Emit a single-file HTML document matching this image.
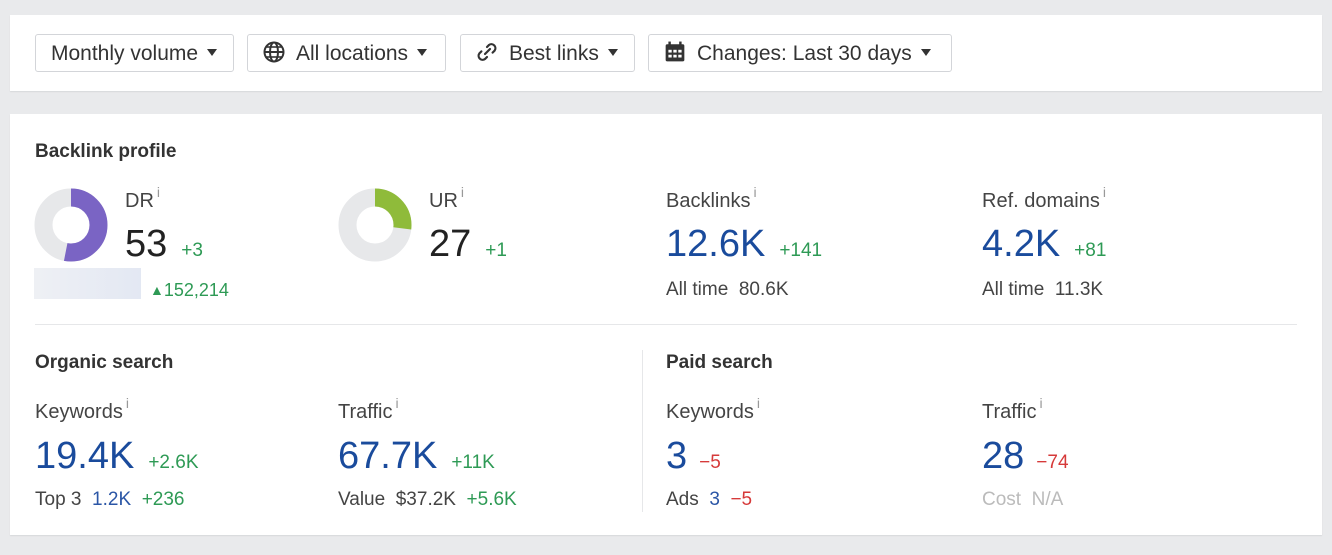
<!DOCTYPE html>
<html><head><meta charset="utf-8"><style>
*{margin:0;padding:0;box-sizing:border-box}
body{width:1332px;height:555px;background:#e9eaec;font-family:"Liberation Sans",Arial,sans-serif;color:#333;position:relative;overflow:hidden}
.card{position:absolute;left:10px;width:1312px;background:#fff;box-shadow:0 1px 1px rgba(0,0,0,.08)}
.btn{position:absolute;top:34px;height:38px;border:1px solid #d3d5d9;border-radius:3px;background:#fff;font-size:21px;line-height:37px;color:#333;padding-left:15px;white-space:nowrap}
.btn .car{display:inline-block;width:0;height:0;border-left:5.5px solid transparent;border-right:5.5px solid transparent;border-top:7px solid #333;vertical-align:middle;margin-left:9px;margin-top:-3px}
.btn svg{vertical-align:middle;margin-top:-4px;margin-right:11px}
.a{position:absolute;white-space:nowrap;line-height:1}
.h{font-size:19px;font-weight:bold;color:#333}
.l{font-size:20px;color:#444}
.l sup{font-size:14px;color:#999;vertical-align:top;position:relative;top:-6px;margin-left:3px}
.big{font-size:38px;color:#1a4b9c}
.big.k{color:#222}
.g{color:#2e9a55;font-size:19px;margin-left:14px}
.r{color:#d63a3a;font-size:19px;margin-left:12px}
.s{font-size:19px;color:#444}
.s .b{color:#2b56a6}
.s .gg{color:#2e9a55}
.s .rr{color:#d63a3a}
</style></head><body>
<div class="card" style="top:15px;height:76px"></div>
<div class="btn" style="left:35px;width:199px">Monthly volume<span class="car"></span></div>
<div class="btn" style="left:247px;width:199px"><svg width="22" height="22" viewBox="0 0 22 22"><circle cx="11" cy="11" r="9.5" fill="none" stroke="#333" stroke-width="2"/><ellipse cx="11" cy="11" rx="4" ry="9.5" fill="none" stroke="#333" stroke-width="2"/><line x1="1.5" y1="11" x2="20.5" y2="11" stroke="#333" stroke-width="2"/><line x1="3" y1="6" x2="19" y2="6" stroke="#333" stroke-width="1.6"/><line x1="3" y1="16" x2="19" y2="16" stroke="#333" stroke-width="1.6"/></svg>All locations<span class="car"></span></div>
<div class="btn" style="left:460px;width:175px"><svg width="22" height="22" viewBox="0 0 22 22"><path d="M9 13l5-5M11 6l2-2a4 4 0 015.6 5.6l-2 2M11 16l-2 2a4 4 0 01-5.6-5.6l2-2" fill="none" stroke="#333" stroke-width="2.2" stroke-linecap="round"/></svg>Best links<span class="car"></span></div>
<div class="btn" style="left:648px;width:304px"><svg width="22" height="22" viewBox="0 0 20 20"><rect x="1.5" y="3" width="17" height="15.5" rx="1.5" fill="#333"/><rect x="4" y="0.5" width="2.2" height="4" fill="#333"/><rect x="13.8" y="0.5" width="2.2" height="4" fill="#333"/><g fill="#fff"><rect x="4" y="8" width="3" height="2.5"/><rect x="8.5" y="8" width="3" height="2.5"/><rect x="13" y="8" width="3" height="2.5"/><rect x="4" y="12.5" width="3" height="2.5"/><rect x="8.5" y="12.5" width="3" height="2.5"/><rect x="13" y="12.5" width="3" height="2.5"/></g></svg>Changes: Last 30 days<span class="car"></span></div>

<div class="card" style="top:114px;height:421px"></div>
<div class="a h" style="left:35px;top:142px">Backlink profile</div>

<svg class="a" style="left:34px;top:188px" width="74" height="74" viewBox="0 0 74 74">
<circle cx="37" cy="37" r="27.5" fill="none" stroke="#e7e8ea" stroke-width="18"/>
<circle cx="37" cy="37" r="27.5" fill="none" stroke="#7a64c4" stroke-width="18" stroke-dasharray="91.6 200" transform="rotate(-90 37 37)"/>
</svg>
<svg class="a" style="left:338px;top:188px" width="74" height="74" viewBox="0 0 74 74">
<circle cx="37" cy="37" r="27.5" fill="none" stroke="#e7e8ea" stroke-width="18"/>
<circle cx="37" cy="37" r="27.5" fill="none" stroke="#8fbb3a" stroke-width="18" stroke-dasharray="46.6 200" transform="rotate(-90 37 37)"/>
</svg>

<div class="a l" style="left:125px;top:191px">DR<sup>i</sup></div>
<div class="a big k" style="left:125px;top:225px">53<span class="g">+3</span></div>
<div class="a" style="left:34px;top:268px;width:107px;height:31px;background:linear-gradient(90deg,#eef0f4,#e3e8f3)"></div>
<div class="a" style="left:150px;top:281px;font-size:18px;color:#2e9a55"><span style="font-size:14px;position:relative;top:-1px">▲</span>152,214</div>

<div class="a l" style="left:429px;top:191px">UR<sup>i</sup></div>
<div class="a big k" style="left:429px;top:225px">27<span class="g">+1</span></div>

<div class="a l" style="left:666px;top:191px">Backlinks<sup>i</sup></div>
<div class="a big" style="left:666px;top:225px">12.6K<span class="g">+141</span></div>
<div class="a s" style="left:666px;top:280px">All time&nbsp; 80.6K</div>

<div class="a l" style="left:982px;top:191px">Ref. domains<sup>i</sup></div>
<div class="a big" style="left:982px;top:225px">4.2K<span class="g">+81</span></div>
<div class="a s" style="left:982px;top:280px">All time&nbsp; 11.3K</div>

<div class="a" style="left:35px;top:324px;width:1262px;height:1px;background:#e6e7e9"></div>
<div class="a" style="left:642px;top:350px;width:1px;height:162px;background:#e6e7e9"></div>

<div class="a h" style="left:35px;top:353px">Organic search</div>
<div class="a l" style="left:35px;top:402px">Keywords<sup>i</sup></div>
<div class="a big" style="left:35px;top:437px">19.4K<span class="g">+2.6K</span></div>
<div class="a s" style="left:35px;top:490px">Top 3&nbsp; <span class="b">1.2K</span>&nbsp; <span class="gg">+236</span></div>

<div class="a l" style="left:338px;top:402px">Traffic<sup>i</sup></div>
<div class="a big" style="left:338px;top:437px">67.7K<span class="g">+11K</span></div>
<div class="a s" style="left:338px;top:490px">Value&nbsp; $37.2K&nbsp; <span class="gg">+5.6K</span></div>

<div class="a h" style="left:666px;top:353px">Paid search</div>
<div class="a l" style="left:666px;top:402px">Keywords<sup>i</sup></div>
<div class="a big" style="left:666px;top:437px">3<span class="r">−5</span></div>
<div class="a s" style="left:666px;top:490px">Ads&nbsp; <span class="b">3</span>&nbsp; <span class="rr">−5</span></div>

<div class="a l" style="left:982px;top:402px">Traffic<sup>i</sup></div>
<div class="a big" style="left:982px;top:437px">28<span class="r">−74</span></div>
<div class="a s" style="left:982px;top:490px;color:#bbb">Cost&nbsp; N/A</div>
</body></html>
